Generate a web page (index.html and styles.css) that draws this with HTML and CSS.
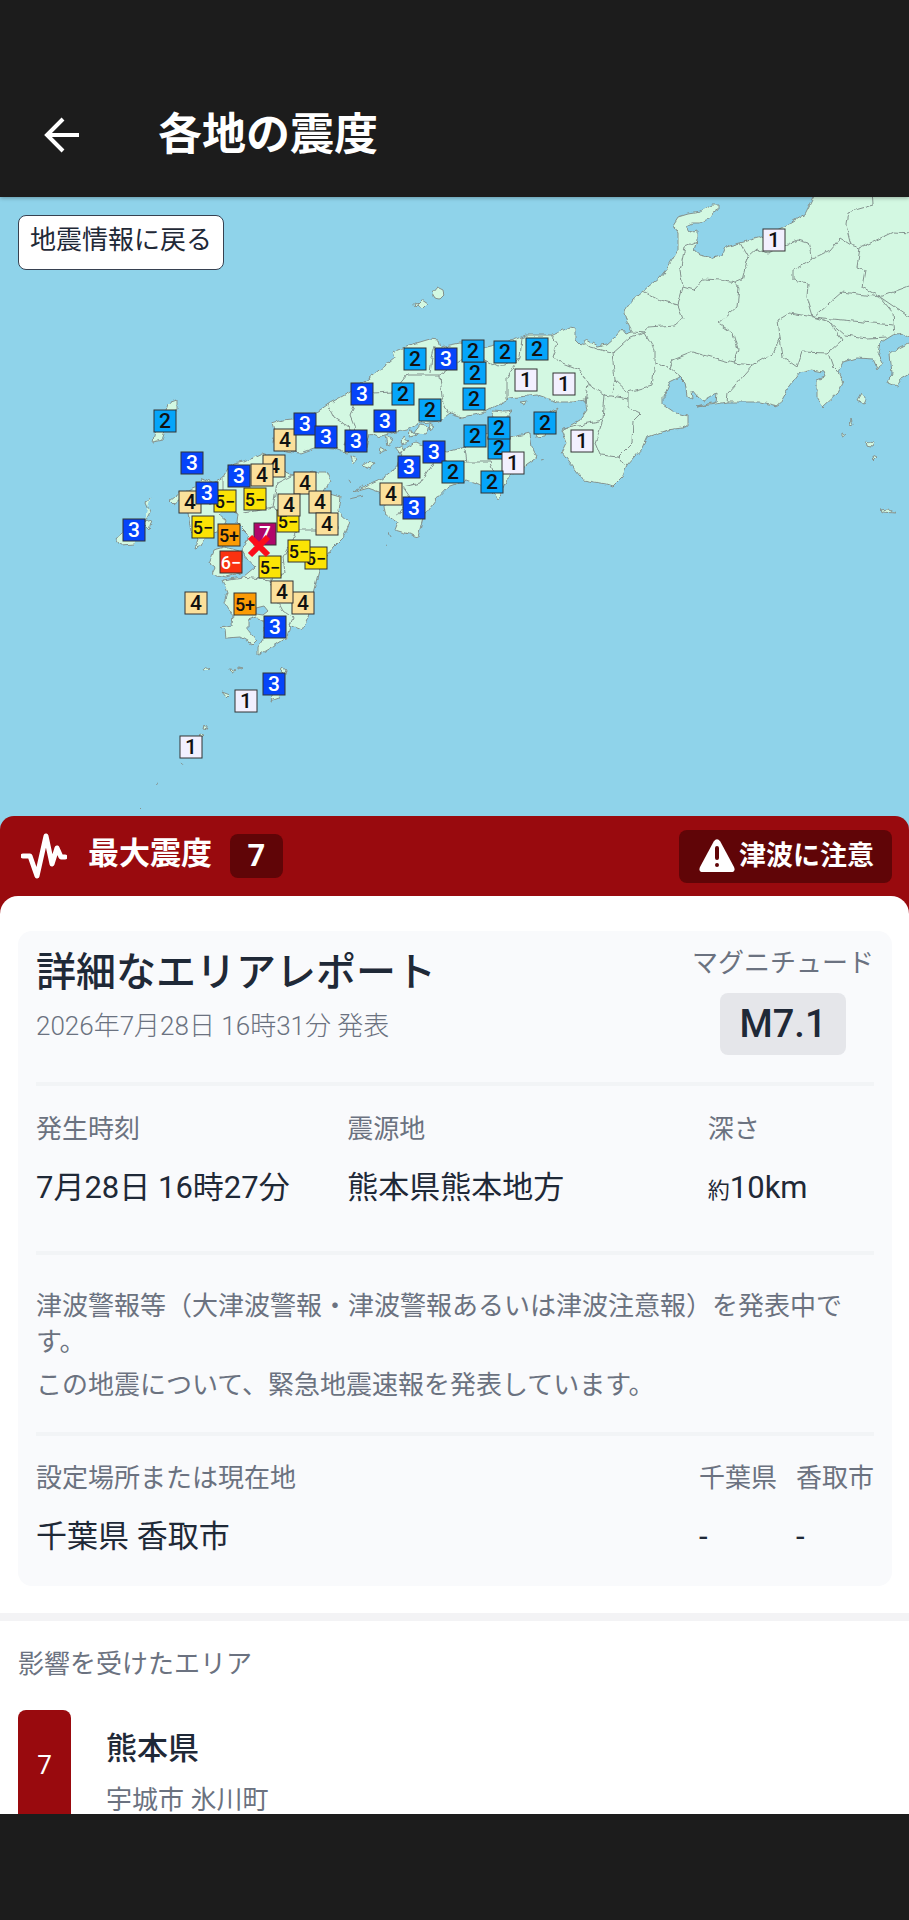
FILE: index.html
```html
<!DOCTYPE html>
<html lang="ja">
<head>
<meta charset="utf-8">
<meta name="viewport" content="width=device-width, initial-scale=1">
<title>各地の震度</title>
<link rel="stylesheet" href="styles.css">
</head>
<body>
<div class="app">
  <header class="topbar">
    <button class="back" type="button" aria-label="戻る">
      <svg viewBox="0 0 36 36" width="36" height="36" aria-hidden="true"><path d="M35 18H3M19 2L3 18l16 16"/></svg>
    </button>
    <h1 class="topbar-title">各地の震度</h1>
  </header>

  <main class="content">
    <section class="map" aria-label="震度分布">
      <svg class="map-svg" viewBox="0 197 909 640">
        <defs>
          <filter id="rough" x="0" y="0" width="1" height="1">
            <feTurbulence type="fractalNoise" baseFrequency="0.14" numOctaves="2" seed="4"/>
            <feDisplacementMap in="SourceGraphic" scale="5" xChannelSelector="R" yChannelSelector="G"/>
          </filter>
        </defs>
        <g filter="url(#rough)">
          <rect class="sea" x="-20" y="170" width="950" height="690"/>
          <g class="land">
            <path d="M817 190L805 214 785 226 765 236 740 243 725 247 722 255 713 258 700 255 694 250 697 240 697 230 690 232 686 226 692 223 700 223 710 218 713 212 719 210 719 205 712 205 700 212 688 214 678 217 673 225 678 233 678 250 668 267 660 277 643 291 632 300 624 312 627 322 632 332 626 334 622 329 615 337 607 344 597 346 587 340 580 345 575 340 575 328 570 327 553 335 527 335 507 342 487 347 460 343 440 347 438 340 430 339 410 345 393 352 395 357 373 375 352 391 330 403 317 412 300 418 282 420 272 423 275 433 273 442 280 450 300 453 317 447 333 448 347 453 360 449 367 447 370 434 377 437 393 433 407 430 420 423 440 421 450 413 463 417 483 413 497 405 510 398 537 395 557 402 573 402 585 400 587 410 580 420 562 430 567 443 562 453 573 467 583 480 607 484 613 486 622 477 627 465 642 448 647 437 667 430 682 428 688 426 688 416 673 412 663 405 663 397 670 382 680 377 685 382 687 396 693 399 692 390 697 396 703 401 717 393 716 402 697 407 727 402 760 402 778 406 787 390 800 373 812 370 823 372 825 377 817 380 817 398 823 407 838 393 843 383 838 372 843 362 857 358 873 359 878 370 883 362 878 353 880 343 893 335 902 333 909 338 940 340 940 190Z"/>
            <path d="M940 346L909 343 897 349 890 355 892 373 888 382 897 386 901 378 909 373 940 360Z"/>
            <path d="M353 492L380 480 397 467 402 450 415 442 427 447 447 452 465 447 473 440 490 432 513 437 530 433 532 447 537 457 523 467 507 480 498 500 487 487 467 480 447 487 435 500 423 517 418 537 395 530 398 522 385 513 382 493 368 488Z"/>
            <path d="M243 462L263 453 277 458 282 470 293 475 313 472 327 472 331 480 323 492 340 497 338 512 350 523 343 537 333 547 320 567 313 593 308 617 302 630 290 625 287 637 270 648 258 655 258 648 265 637 263 620 257 617 248 620 248 630 256 640 252 644 240 637 226 638 225 630 220 627 232 625 233 615 225 603 228 593 223 580 243 577 255 567 247 558 242 550 248 540 247 533 237 523 238 514 225 508 219 514 226 520 222 530 206 536 201 546 195 548 198 539 191 532 188 513 180 503 183 493 197 487 201 478 214 482 223 477 230 465Z"/>
            <path d="M214 550L225 547 243 552 240 573 226 577 212 574 215 568 209 563Z"/>
            <path d="M177 400L168 403 165 412 156 424 153 442 162 440 166 428 177 408Z"/>
            <path d="M151 497L146 503 150 512 145 522 152 520 149 530 143 524 141 531M134 538L122 532 116 539 120 545 135 544M180 492L169 501 173 505 181 498Z"/>
            <path d="M437 287l6 3 1 5-4 4-5-1-3-5zM421 300l6 4-5 5-6-4zM414 303l4 2-3 3z"/>
            <path d="M558 408L548 414 539 428 536 438 545 437 549 424ZM512 411l-8 9-13-2 2-7 12 1z"/>
            <path d="M367 460l8 3-4 6-9-3zM385 436l8 4-6 5zM420 425l9 2-5 7-9-2zM403 437l6 5-7 2zM351 456l6 3-4 5zM395 448l7-3 3 5-6 3zM430 423l4 3-5 4zM465 427l6 1-3 4zM381 447l5 3-6 3zM410 430l8 5-9 2zM520 402l7-1-2 4z"/>
            <path d="M282 667l4 3-5 16-2 12-8 3 3-12 7-13zM230 669l6 1-5 2zM205 666l4 3-5 1zM222 692l8 3-3 3zM204 724l4 5-5-1zM199 734l6 1-4 4zM239 667l4 1-4 2z"/>
            <path d="M861 393l5 7-2 4-7-4zM851 418l2 7-3 1zM842 433l4 2-4 2zM866 441l8 2-2 4-5-1zM873 456l4 2-3 3zM879 510l9-1 8 4-14-1z"/>
            <path d="M182 761l1 4M156 784l2 1M141 808l1 1M173 643l1 1M290 395l1 1"/>
            <path d="M389 532l2 6M350 480l2 3M385 545l2 1M541 460l4-1M363 496l-13 3M355 489l8-4"/>
          </g>
          <g class="border">
            <path d="M872 190L873 205 848 212 846 225 851 245 840 238 830 250 812 259 808 243 798 240 787 245 767 253 757 249 748 257 740 243M748 257L742 280 735 283 720 280 703 279 693 290 683 287 680 270 685 247 697 242M683 287L678 305 660 300 643 291M678 305L683 318 675 325 648 327 645 333 632 332M645 333L630 337 612 353 590 347 583 342M645 333L655 350 655 363 670 368 680 376M655 363L652 385 628 392 615 380 612 353M670 368L673 360 693 352 733 363 738 350 733 333 718 323 737 307 739 288 735 283M733 363L753 365 728 393 727 402M753 365L773 353 780 337 778 320 790 313 813 317 807 297 808 283 793 280 793 270 812 259M780 337L783 357 797 367 802 352 828 353 842 340 830 322 813 317M828 353L833 367 838 372M813 317L842 292 880 297 862 287 865 270 857 267 860 248 851 245M860 248L893 232 930 234M880 297L925 280M880 297L893 313 895 335M880 297L925 328M813 317L893 325M830 322L845 335 867 338 887 337"/>
            <path d="M585 403L588 384 605 395 603 420 595 443 600 455 618 457 632 443 633 420 640 413 628 407 628 392M605 395L628 399M618 457L625 467M603 420L563 428M615 380L612 393M588 384L580 370 560 362 552 357 557 343 552 336M522 337L520 358 507 377 507 400M520 358L497 367 480 358 460 360 440 375 407 375 393 392 373 393 355 403 350 415 355 427 350 435M440 375L442 397 448 413M435 345L432 358 430 373M328 404L335 418 350 428 345 445"/>
            <path d="M443 453L430 467 420 483 403 487 410 497 397 517M430 460L467 462 490 462 497 480M465 449L467 462M293 475L277 483 273 507 243 512M297 530L317 530 340 527M273 507L288 520 297 530 283 557 285 573 270 580 243 577M270 580L273 593 282 610 293 618 290 625M223 477L223 497 237 513M273 507L280 513M201 486L210 505"/>
          </g>
        </g>
        <path class="lake" d="M256 608l8-2 4 5-5 4-7-1z"/>
        <g id="marks"></g>
        <path class="epicentre" d="M250 537L268 555M268 537L250 555"/>
      </svg>
      <button class="map-back" type="button">地震情報に戻る</button>
    </section>

    <section class="sheet">
      <div class="alert">
        <svg class="wave" viewBox="0 0 46 46" width="46" height="46" aria-hidden="true"><path d="M2 23H9L16 43 25 3 31 31 36 15 40 24H44"/></svg>
        <h2 class="alert-title">最大震度</h2>
        <span class="alert-level">7</span>
        <span class="tsunami">
          <svg viewBox="0 0 36 34" width="36" height="34" aria-hidden="true"><path class="tri" d="M14.700 2.500Q18 -2 21.300 2.500L35 28Q37 33 32 33H4Q-1 33 1 28Z"/><path class="bang" d="M18 9V19M18 26V26"/></svg>
          津波に注意
        </span>
      </div>

      <div class="panel">
        <article class="card">
          <div class="report">
            <div class="report-main">
              <h2 class="report-title">詳細なエリアレポート</h2>
              <p class="report-date">2026年7月28日 16時31分 発表</p>
            </div>
            <div class="magnitude">
              <span class="label">マグニチュード</span>
              <strong class="magnitude-value">M7.1</strong>
            </div>
          </div>
          <dl class="facts">
            <div><dt class="label">発生時刻</dt><dd class="value">7月28日 16時27分</dd></div>
            <div><dt class="label">震源地</dt><dd class="value">熊本県熊本地方</dd></div>
            <div><dt class="label">深さ</dt><dd class="value"><small>約</small>10km</dd></div>
          </dl>
          <div class="notes">
            <p>津波警報等（大津波警報・津波警報あるいは津波注意報）を発表中です。</p>
            <p>この地震について、緊急地震速報を発表しています。</p>
          </div>
          <dl class="places">
            <div class="place-main"><dt class="label">設定場所または現在地</dt><dd class="value">千葉県 香取市</dd></div>
            <div><dt class="label">千葉県</dt><dd class="value">-</dd></div>
            <div><dt class="label">香取市</dt><dd class="value">-</dd></div>
          </dl>
        </article>

        <section class="areas">
          <h2 class="areas-title">影響を受けたエリア</h2>
          <div class="area">
            <span class="area-level">7</span>
            <div class="area-text">
              <h3 class="area-name">熊本県</h3>
              <p class="area-cities">宇城市 氷川町</p>
            </div>
          </div>
        </section>
      </div>
    </section>
  </main>
  <div class="navbar"></div>
</div>
<script src="map.js"></script>
</body>
</html>
```
FILE: styles.css
```css
* { box-sizing: border-box; margin: 0; padding: 0; }

body {
  font-family: Roboto, "Noto Sans CJK JP", sans-serif;
  font-size: 26px;
  color: #1f2937;
  background: #1c1c1c;
}

button { font: inherit; color: inherit; cursor: pointer; }

.app { display: flex; flex-direction: column; height: 100vh; }

.topbar {
  position: relative;
  z-index: 1;
  display: flex;
  align-items: center;
  gap: 78px;
  flex: none;
  padding: 73px 44px 0;
  height: 197px;
  background: #1c1c1c;
  color: #fff;
  box-shadow: 0 1px 4px rgba(0, 0, 0, .3);
}
.back { display: flex; background: none; border: 0; }
.back path { fill: none; stroke: #fff; stroke-width: 4; }
.topbar-title { font-size: 44px; font-weight: 700; line-height: 56px; }

.content { flex: 1; min-height: 0; overflow: hidden; background: #fff; }

.map { position: relative; background: #8fd3ea; }
.map-svg { display: block; width: 100%; }
.sea { fill: #8fd3ea; }
.land path { fill: #d3f8e2; stroke: #84928e; stroke-width: 1; stroke-linejoin: round; }
.border path { fill: none; stroke: #84928e; stroke-width: 1; }
.lake { fill: #8fd3ea; stroke: #84928e; }
.epicentre { fill: none; stroke: #fb0d1b; stroke-width: 6; }
.mark rect { stroke: #333; stroke-width: 1; }
.mark text {
  font-family: Roboto, sans-serif;
  font-size: 21px;
  font-weight: 500;
  text-anchor: middle;
  fill: #111;
}
.mark .wide { font-size: 18px; }
.s1 rect { fill: #f2f0ff; }
.s2 rect { fill: #05a5fa; }
.s3 rect { fill: #0544fa; }
.s4 rect { fill: #fbe09b; }
.s5l rect { fill: #fbe305; }
.s5h rect { fill: #fb9b05; }
.s6l rect { fill: #fa3210; }
.s7 rect { fill: #b0066a; }
.mark.s3 text, .mark.s6l text, .mark.s7 text { fill: #fff; }

.map-back {
  position: absolute;
  top: 18px;
  left: 18px;
  padding: 6px 11px 10px;
  line-height: 37px;
  background: #fff;
  border: 1px solid #374151;
  border-radius: 8px;
}

.sheet {
  position: relative;
  margin-top: -21px;
  background: #990a0e;
  border-radius: 14px 14px 0 0;
}
.alert {
  display: flex;
  align-items: center;
  height: 80px;
  padding: 0 17px 0 21px;
  color: #fff;
}
.wave path { fill: none; stroke: #fff; stroke-width: 5; stroke-linejoin: round; stroke-linecap: round; }
.alert-title { margin-left: 21px; padding-bottom: 5px; font-size: 31px; font-weight: 700; line-height: 44px; }
.alert-level {
  margin-left: 18px;
  width: 53px;
  border-radius: 8px;
  background: #600507;
  font-size: 31px;
  font-weight: 700;
  line-height: 44px;
  text-align: center;
}
.tsunami {
  display: flex;
  align-items: center;
  gap: 4px;
  margin-left: auto;
  padding: 0 18px 0 20px;
  border-radius: 8px;
  background: #600507;
  font-size: 27px;
  font-weight: 700;
  line-height: 53px;
}
.tri { fill: #fff; }
.bang { fill: none; stroke: #600507; stroke-width: 4; stroke-linecap: round; }

.panel { padding-top: 35px; background: #fff; border-radius: 18px 18px 0 0; }
.card {
  margin: 0 17px 27px 18px;
  padding: 18px;
  border-radius: 14px;
  background: #f9fafc;
}
.label { display: block; line-height: 36px; color: #6b7280; }
.value { font-size: 31px; line-height: 46px; }
.value small { font-size: 22px; }

.report { display: flex; justify-content: space-between; height: 133px; }
.report-title { font-size: 40px; font-weight: 500; line-height: 48px; }
.report-date { margin-top: 11px; font-weight: 300; line-height: 36px; color: #6b7280; }
.magnitude { display: flex; flex-direction: column; align-items: center; gap: 12px; margin-top: -4px; }
.magnitude-value {
  padding: 0 20px;
  border-radius: 8px;
  background: #e5e6ea;
  font-size: 38px;
  font-weight: 500;
  line-height: 62px;
}

.facts {
  display: grid;
  grid-template-columns: 311fr 360fr 166fr;
  padding: 25px 0 37px;
  border-top: 4px solid #f2f4f6;
}
.facts .value, .places .value { margin-top: 18px; }

.notes {
  padding: 33px 0 29px;
  border-top: 4px solid #f2f4f6;
  line-height: 36px;
  color: #6b7280;
}
.notes p + p { margin-top: 7px; }

.places {
  display: flex;
  gap: 19px;
  padding: 24px 0 8px;
  border-top: 4px solid #f2f4f6;
}
.place-main { flex: 1; }

.areas { padding: 25px 18px 0; border-top: 8px solid #f3f3f5; }
.areas-title { font-size: 26px; font-weight: 400; line-height: 36px; color: #6b7280; }
.area { display: flex; gap: 35px; margin-top: 28px; height: 110px; }
.area-level {
  width: 53px;
  border-radius: 8px 8px 0 0;
  background: #990a0e;
  color: #fff;
  line-height: 110px;
  text-align: center;
}
.area-text { padding-top: 16px; }
.area-name { font-size: 31px; font-weight: 500; line-height: 46px; }
.area-cities { margin-top: 10px; line-height: 36px; color: #6b7280; }

.navbar { flex: none; height: 106px; background: #1c1c1c; }
```
FILE: map.js
```js
// Observation points in drawing order: [x, y, intensity]
const points = [
  [774, 240, '1'], [582, 441, '1'], [415, 359, '2'], [446, 359, '3'], [475, 373, '2'],
  [473, 351, '2'], [505, 352, '2'], [537, 349, '2'], [526, 380, '1'], [564, 384, '1'],
  [362, 394, '3'], [403, 394, '2'], [474, 399, '2'], [430, 410, '2'], [385, 421, '3'],
  [545, 423, '2'], [356, 441, '3'], [475, 436, '2'], [499, 448, '2'], [499, 428, '2'],
  [434, 452, '3'], [513, 463, '1'], [409, 467, '3'], [453, 472, '2'], [492, 482, '2'],
  [391, 494, '4'], [414, 508, '3'], [165, 421, '2'], [285, 440, '4'], [305, 424, '3'],
  [326, 437, '3'], [192, 463, '3'], [274, 466, '4'], [239, 476, '3'], [262, 475, '4'],
  [305, 483, '4'], [190, 502, '4'], [225, 501, '5-'], [207, 493, '3'], [255, 499, '5-'],
  [320, 502, '4'], [288, 521, '5-'], [289, 505, '4'], [327, 524, '4'], [134, 530, '3'],
  [203, 527, '5-'], [229, 535, '5+'], [265, 534, '7'], [316, 558, '5-'], [299, 551, '5-'],
  [231, 562, '6-'], [270, 567, '5-'], [303, 603, '4'], [282, 592, '4'], [196, 603, '4'],
  [245, 604, '5+'], [275, 627, '3'], [274, 684, '3'], [246, 701, '1'], [191, 747, '1']
];

document.getElementById('marks').innerHTML = points.map(([x, y, level]) => {
  const cls = 's' + level.replace('-', 'l').replace('+', 'h');
  const label = level.replace('-', '−');
  const wide = level.length > 1 ? ' class="wide"' : '';
  return `<g class="mark ${cls}" transform="translate(${x} ${y})">` +
    `<rect x="-11" y="-11" width="22" height="22"/><text y="7"${wide}>${label}</text></g>`;
}).join('');
```
